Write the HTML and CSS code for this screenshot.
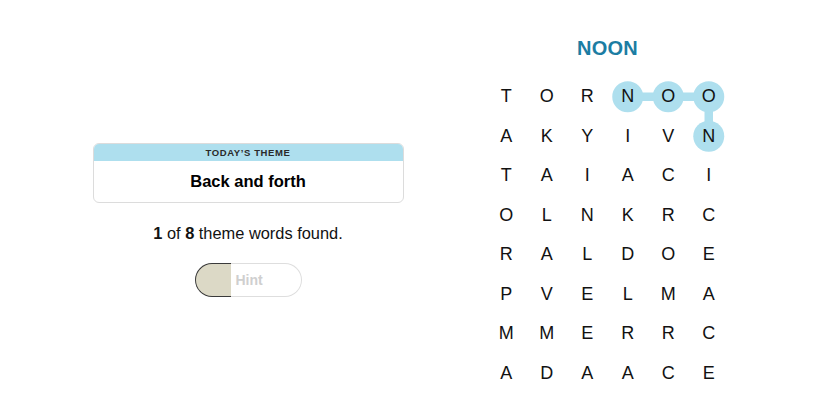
FILE: index.html
```html
<!DOCTYPE html>
<html>
<head>
<meta charset="utf-8">
<link rel="stylesheet" href="styles.css">
</head>
<body>
<main class="page">
  <section class="left">
    <div class="theme-card">
      <div class="theme-head">TODAY’S THEME</div>
      <div class="theme-body">Back and forth</div>
    </div>
    <p class="status"><b>1</b> of <b>8</b> theme words found.</p>
    <button class="hint"><span class="hint-fill"></span><span class="hint-label">Hint</span></button>
  </section>
  <section class="right">
    <h1 class="word">NOON</h1>
    <div class="board">
      <svg class="links" width="243" height="316" viewBox="0 0 243 316">
        <g stroke="#aedfee" stroke-width="8.5" fill="none">
          <line x1="141.75" y1="19.75" x2="222.75" y2="19.75"/>
          <line x1="222.75" y1="19.75" x2="222.75" y2="59.25"/>
        </g>
        <g fill="#aedfee">
          <circle cx="141.75" cy="19.75" r="15.5"/>
          <circle cx="182.25" cy="19.75" r="15.5"/>
          <circle cx="222.75" cy="19.75" r="15.5"/>
          <circle cx="222.75" cy="59.25" r="15.5"/>
        </g>
      </svg>
      <div class="grid">
        <span>T</span><span>O</span><span>R</span><span>N</span><span>O</span><span>O</span>
        <span>A</span><span>K</span><span>Y</span><span>I</span><span>V</span><span>N</span>
        <span>T</span><span>A</span><span>I</span><span>A</span><span>C</span><span>I</span>
        <span>O</span><span>L</span><span>N</span><span>K</span><span>R</span><span>C</span>
        <span>R</span><span>A</span><span>L</span><span>D</span><span>O</span><span>E</span>
        <span>P</span><span>V</span><span>E</span><span>L</span><span>M</span><span>A</span>
        <span>M</span><span>M</span><span>E</span><span>R</span><span>R</span><span>C</span>
        <span>A</span><span>D</span><span>A</span><span>A</span><span>C</span><span>E</span>
      </div>
    </div>
  </section>
</main>
</body>
</html>
```

FILE: styles.css
```css
* { box-sizing: border-box; }
html, body { margin: 0; padding: 0; background: #fff; }
body {
  font-family: "Liberation Sans", Arial, sans-serif;
  color: #121212;
  width: 825px;
  height: 413px;
  overflow: hidden;
}
.page {
  display: flex;
  align-items: flex-start;
}
.left {
  width: 496px;
  padding-top: 143px;
  display: flex;
  flex-direction: column;
  align-items: center;
}
.theme-card {
  width: 311px;
  border: 1px solid #dcdcdc;
  border-radius: 6px;
  overflow: hidden;
}
.theme-head {
  background: #aedfee;
  height: 17px;
  line-height: 17px;
  text-align: center;
  font-size: 9.5px;
  font-weight: bold;
  letter-spacing: 0.6px;
  color: #2a2a2a;
}
.theme-body {
  height: 41px;
  line-height: 41px;
  text-align: center;
  font-size: 16.5px;
  font-weight: bold;
  color: #000;
}
.status {
  margin: 20px 0 0;
  font-size: 16.4px;
  line-height: 20px;
  color: #121212;
}
.hint {
  margin-top: 20px;
  width: 107px;
  height: 34px;
  border: none;
  background: transparent;
  padding: 0;
  display: flex;
  font-family: inherit;
}
.hint-fill {
  width: 36px;
  height: 34px;
  background: #dcd9c6;
  border: 1.5px solid #3a3a3a;
  border-right: none;
  border-radius: 17px 0 0 17px;
}
.hint-label {
  flex: 1;
  height: 34px;
  border: 1px solid #dedede;
  border-left: none;
  border-radius: 0 17px 17px 0;
  display: flex;
  align-items: center;
  padding-left: 5px;
  font-size: 14px;
  font-weight: bold;
  color: #cfcfcf;
}
.right {
  width: 243px;
  margin-left: -10px;
  padding-top: 36px;
  display: flex;
  flex-direction: column;
  align-items: center;
}
.word {
  margin: 0;
  height: 24px;
  line-height: 24px;
  font-size: 20px;
  font-weight: bold;
  color: #1c7da3;
  letter-spacing: 0.3px;
}
.board {
  position: relative;
  margin-top: 17px;
  width: 243px;
  height: 316px;
}
.links {
  position: absolute;
  left: 0;
  top: 0;
}
.grid {
  position: relative;
  display: grid;
  grid-template-columns: repeat(6, 40.5px);
  grid-auto-rows: 39.5px;
}
.grid span {
  display: flex;
  align-items: center;
  justify-content: center;
  font-size: 18px;
  color: #121212;
}
```
